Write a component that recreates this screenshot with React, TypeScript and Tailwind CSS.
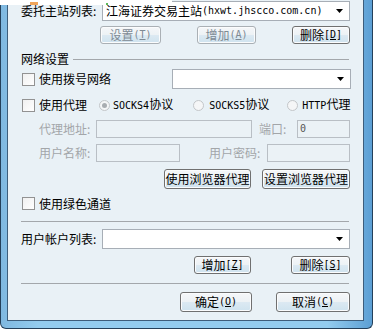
import React from 'react';

// latin runs in the bitmap-like mono face, 6px per glyph
const M = ({ children }: { children: React.ReactNode }) => (
    <span className="font-['DejaVu_Sans_Mono',monospace] text-[10px]">{children}</span>
);

const Btn = ({ w, disabled, children }: { w: string; disabled?: boolean; children: React.ReactNode }) => (
    <div
        className={`${w} h-full flex items-center justify-center rounded-[3px] border shadow-[inset_0_0_0_1px_#fbfcfd] bg-[linear-gradient(#f5f7f9_0%,#edf2f5_48%,#dce9f2_52%,#cfe3ef_100%)] ${
            disabled ? 'border-[#aab0b5] text-[#7e8a94]' : 'border-[#707070] text-black'
        }`}
    >
        {children}
    </div>
);

const Arrow = () => (
    <svg width="7" height="4" viewBox="0 0 7 4" className="shrink-0">
        <path d="M0 0h7L3.5 4z" fill="#000" />
    </svg>
);

const Combo = ({ w, children }: { w: string; children?: React.ReactNode }) => (
    <div className={`${w} h-full flex items-center border border-[#a7aeb6] bg-white pl-[3px] pr-[6px]`}>
        <div className="flex-1 flex items-center whitespace-nowrap">{children}</div>
        <Arrow />
    </div>
);

const Field = ({ w, children }: { w: string; children?: React.ReactNode }) => (
    <div className={`${w} h-full flex items-center border border-[#b9bfc5] bg-[#ebf2f6] pl-[2px] text-[#555]`}>
        {children}
    </div>
);

const Check = () => (
    <div className="ml-[1px] w-[13px] h-[13px] border border-[#929292] bg-[linear-gradient(135deg,#f0f0f0,#ffffff)] shrink-0" />
);

const Radio = ({ on }: { on?: boolean }) => (
    <div className="w-[11px] h-[11px] rounded-full border border-[#c3c6c9] bg-[#f5f6f7] flex items-center justify-center shrink-0">
        {on && <div className="w-[5px] h-[5px] rounded-full bg-[#a9adb1]" />}
    </div>
);

export default function App() {
    return (
        <div className="relative w-[373px] h-[329px] overflow-hidden font-['Noto_Sans_CJK_SC','Liberation_Sans',sans-serif] text-[12px] leading-[12px] text-black">
            <div className="w-full h-full flex border-x border-b border-[#24405a] rounded-b-[6px] pl-[6px] pr-[8px] pb-[7px] bg-[linear-gradient(90deg,#7fb8e0_0%,#93ccef_10%,#93ccef_88%,#5c9fd4_100%)]">
                <div className="flex-1 flex flex-col border-x border-b border-[#3d5d7b] bg-[#e9f1f6] pl-[13px] pr-[12px]">
                    {/* 委托主站 */}
                    <div className="mt-[1px] h-[20px] flex items-center">
                        <div className="w-[81px]">委托主站列表:</div>
                        <Combo w="w-[248px]">
                            江海证券交易主站<M>(hxwt.jhscco.com.cn)</M>
                        </Combo>
                    </div>
                    <div className="mt-[5px] h-[18px] flex">
                        <div className="ml-[79px]" />
                        <Btn w="w-[61px]" disabled>
                            设置<M>(<u>T</u>)</M>
                        </Btn>
                        <div className="ml-[36px]" />
                        <Btn w="w-[59px]" disabled>
                            增加<M>(<u>A</u>)</M>
                        </Btn>
                        <div className="ml-[36px]" />
                        <Btn w="w-[58px]">
                            删除<M>[<u>D</u>]</M>
                        </Btn>
                    </div>

                    {/* 网络设置 */}
                    <div className="mt-[9px] h-[12px] flex items-center">
                        <div>网络设置</div>
                        <div className="flex-1 ml-[4px] mr-[2px] h-px bg-[#a3a7ab]" />
                    </div>
                    <div className="mt-[4px] h-[20px] flex items-center">
                        <Check />
                        <div className="ml-[4px]">使用拨号网络</div>
                        <div className="ml-auto h-full flex">
                            <Combo w="w-[179px]" />
                        </div>
                    </div>
                    <div className="mt-[8px] h-[16px] flex items-center">
                        <Check />
                        <div className="ml-[4px]">使用代理</div>
                        <div className="ml-[12px]" />
                        <Radio on />
                        <div className="ml-[3px]">
                            <M>SOCKS4</M>协议
                        </div>
                        <div className="ml-[20px]" />
                        <Radio />
                        <div className="ml-[5px]">
                            <M>SOCKS5</M>协议
                        </div>
                        <div className="ml-[18px]" />
                        <Radio />
                        <div className="ml-[4px]">
                            <M>HTTP</M>代理
                        </div>
                    </div>
                    <div className="mt-[7px] h-[18px] flex items-center text-[#a3a6a9]">
                        <div className="ml-[18px] w-[57px]">代理地址:</div>
                        <Field w="w-[156px]" />
                        <div className="ml-[7px] w-[38px]">端口:</div>
                        <Field w="w-[53px]">
                            <M>0</M>
                        </Field>
                    </div>
                    <div className="mt-[6px] h-[18px] flex items-center text-[#a3a6a9]">
                        <div className="ml-[18px] w-[57px]">用户名称:</div>
                        <Field w="w-[84px]" />
                        <div className="ml-[29px] w-[58px]">用户密码:</div>
                        <Field w="w-[83px]" />
                    </div>
                    <div className="mt-[7px] h-[20px] flex">
                        <div className="ml-[143px]" />
                        <Btn w="w-[87px]">使用浏览器代理</Btn>
                        <div className="ml-[11px]" />
                        <Btn w="w-[88px]">设置浏览器代理</Btn>
                    </div>
                    <div className="mt-[8px] h-[13px] flex items-center">
                        <Check />
                        <div className="ml-[4px]">使用绿色通道</div>
                    </div>

                    <div className="mt-[11px] mr-[2px] h-px bg-[#a3a7ab]" />

                    {/* 用户帐户 */}
                    <div className="mt-[7px] h-[20px] flex items-center">
                        <div className="w-[81px]">用户帐户列表:</div>
                        <Combo w="w-[248px]" />
                    </div>
                    <div className="mt-[7px] h-[18px] flex">
                        <div className="ml-[173px]" />
                        <Btn w="w-[57px]">
                            增加<M>[<u>Z</u>]</M>
                        </Btn>
                        <div className="ml-[40px]" />
                        <Btn w="w-[59px]">
                            删除<M>[<u>S</u>]</M>
                        </Btn>
                    </div>

                    <div className="mt-[9px] mr-[2px] h-px bg-[#a3a7ab]" />

                    <div className="mt-[8px] h-[20px] flex">
                        <div className="ml-[159px]" />
                        <Btn w="w-[72px]">
                            确定<M>(<u>O</u>)</M>
                        </Btn>
                        <div className="ml-[24px]" />
                        <Btn w="w-[74px]">
                            取消<M>(<u>C</u>)</M>
                        </Btn>
                    </div>
                </div>
            </div>

            {/* strip of a window lying over the top edge */}
            <div className="absolute left-0 top-0 w-[172px] h-[5px] bg-white">
                <div className="absolute left-[30px] top-[2px] w-[8px] h-[3px] bg-[#f0a55a]" />
                <div className="absolute left-[106px] top-[3px] w-[2px] h-[2px] bg-[#5cb85c]" />
            </div>
        </div>
    );
}
